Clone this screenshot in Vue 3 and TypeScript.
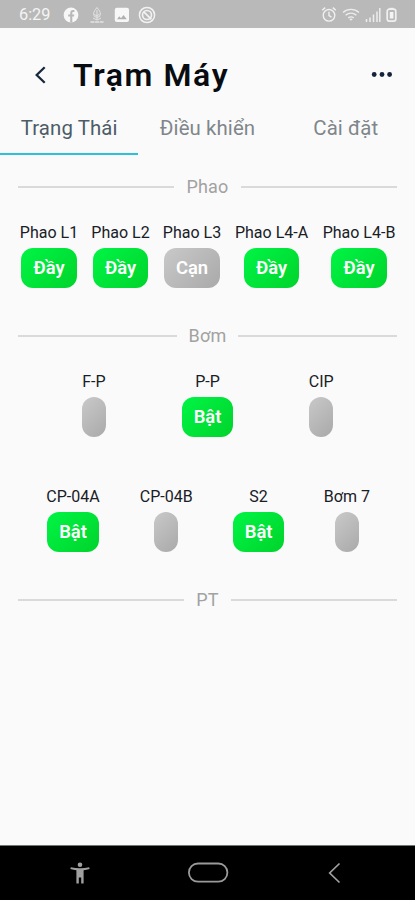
<script setup lang="ts">
interface Device {
  name: string
  state: string
  on: boolean
}

interface Group {
  title: string
  rows: { kind: string; devices: Device[] }[]
}

const tabs: string[] = ['Trạng Thái', 'Điều khiển', 'Cài đặt']

const groups: Group[] = [
  {
    title: 'Phao',
    rows: [
      {
        kind: 'floats',
        devices: [
          { name: 'Phao L1', state: 'Đầy', on: true },
          { name: 'Phao L2', state: 'Đầy', on: true },
          { name: 'Phao L3', state: 'Cạn', on: false },
          { name: 'Phao L4-A', state: 'Đầy', on: true },
          { name: 'Phao L4-B', state: 'Đầy', on: true },
        ],
      },
    ],
  },
  {
    title: 'Bơm',
    rows: [
      {
        kind: 'three',
        devices: [
          { name: 'F-P', state: '', on: false },
          { name: 'P-P', state: 'Bật', on: true },
          { name: 'CIP', state: '', on: false },
        ],
      },
      {
        kind: 'four',
        devices: [
          { name: 'CP-04A', state: 'Bật', on: true },
          { name: 'CP-04B', state: '', on: false },
          { name: 'S2', state: 'Bật', on: true },
          { name: 'Bơm 7', state: '', on: false },
        ],
      },
    ],
  },
  { title: 'PT', rows: [] },
]
</script>

<template>
  <div class="screen">
    <div class="status">
      <span class="clock">6:29</span>
      <svg class="ic-fb" width="16" height="16" viewBox="0 0 16 16">
        <circle cx="8" cy="8" r="7.4" fill="#f7f7f7" />
        <path d="M7.2 15.5V9.6H5.2V7.4h2V6c0-2.100 1.100-3.100 2.900-3.100h1.300v2h-1c-.8 0-1.100.4-1.100 1.100v1.400h2l-.3 2.200H9.300v5.900z" fill="#b9b9b9" />
      </svg>
      <svg class="ic-drop" width="16" height="18" viewBox="0 0 16 18" fill="none" stroke="#e4e4e4">
        <path d="M8 1.500C6 4 4.600 5.800 4.600 8a3.400 3.400 0 0 0 6.800 0C11.400 5.800 10 4 8 1.500zM8 4v10M5.500 8.500 8 10l2.500-2M4 12l4 2 4-2" stroke-width="1" />
        <path d="M1.500 16h13" stroke-width="1.700" stroke-dasharray="4 .6" />
      </svg>
      <svg class="ic-img" width="16" height="16" viewBox="0 0 16 16">
        <rect x=".8" y=".8" width="14.200" height="14.200" rx="2" fill="#f7f7f7" />
        <path d="M3 12.200 5.300 9.300 7 11.200l2.500-3.200 3.300 4.200z" fill="#b0b0b0" />
      </svg>
      <svg class="ic-ring" width="18" height="18" viewBox="0 0 18 18" fill="none" stroke="#f2f2f2">
        <circle cx="9" cy="9" r="7.600" stroke-width="1.500" />
        <circle cx="9" cy="9" r="4.500" stroke-width="1.700" />
        <path d="m5.800 5.800 7.600 7.600" stroke-width="1.700" />
      </svg>
      <span class="grow"></span>
      <svg width="16" height="17" viewBox="0 0 16 17" fill="none" stroke="#f0f0f0" stroke-width="1.400">
        <circle cx="8" cy="9.300" r="5.800" />
        <path d="M8 5.800v3.800l2.500 1.600M1.200 4.200l3-2.600M14.800 4.200l-3-2.600" />
      </svg>
      <svg class="ic-wifi" width="18" height="15" viewBox="0 0 18 15" fill="none" stroke="#ededed" stroke-width="1.400">
        <path d="M1 5.500c4.700-4.200 11.300-4.200 16 0M3.600 8.300c3.200-2.800 7.600-2.800 10.800 0M6.300 10.900c1.700-1.300 3.700-1.300 5.400 0" />
        <path d="m7.200 12.100 1.800 1.700 1.800-1.700a3 3 0 0 0-3.600 0z" fill="#ededed" stroke="none" />
      </svg>
      <svg class="ic-sig" width="16" height="16" viewBox="0 0 16 16" stroke="#ededed" stroke-width="1.500">
        <path d="M1.500 15v-3M5 15v-4.500M8.500 15V7.500M12 15V4.500M14.800 15V1" />
      </svg>
      <svg class="ic-bat" width="11" height="16" viewBox="0 0 11 16">
        <path d="M3.500 2V.8h4V2" fill="#f0f0f0" />
        <rect x="1.200" y="2.200" width="8.600" height="12" rx="2.200" fill="none" stroke="#f0f0f0" stroke-width="1.700" />
        <rect x="3.800" y="5" width="3.600" height="6.500" fill="#f4f4f4" />
      </svg>
    </div>

    <header class="header">
      <svg width="12" height="18" viewBox="0 0 12 18" fill="none" stroke="#18283c" stroke-width="2.300">
        <path d="M10.700 1.200 2.700 9l8 7.800" />
      </svg>
      <h1 class="title">Trạm Máy</h1>
      <svg width="22" height="6" viewBox="0 0 22 6" fill="#14233a">
        <circle cx="3.200" cy="2.500" r="2.400" />
        <circle cx="11" cy="2.500" r="2.400" />
        <circle cx="18.600" cy="2.500" r="2.400" />
      </svg>
    </header>

    <nav class="tabs">
      <span v-for="(tab, i) in tabs" :key="tab" class="tab" :class="{ active: i === 0 }">{{ tab }}</span>
    </nav>

    <main class="content">
      <section v-for="group in groups" :key="group.title" class="group">
        <div class="divider"><span class="caption">{{ group.title }}</span></div>
        <div v-for="row in group.rows" :key="row.kind" class="row" :class="row.kind">
          <div v-for="device in row.devices" :key="device.name" class="device">
            <span class="name">{{ device.name }}</span>
            <span class="badge" :class="{ on: device.on }">{{ device.state }}</span>
          </div>
        </div>
      </section>
    </main>

    <footer class="navbar">
      <svg width="20" height="22" viewBox="0 0 20 22" fill="#a0a0a0">
        <circle cx="10" cy="2.800" r="2.300" />
        <path d="M.8 5.300C6.500 6.600 13.500 6.600 19.200 5.300l.4 1.800c-2 .5-4 .9-6 1.100V21.500h-2.400V15.500H8.800v6H6.400V8.200c-2-.2-4-.6-6-1.100z" />
      </svg>
      <svg width="42" height="22" viewBox="0 0 42 22" fill="none" stroke="#9a9a9a" stroke-width="1.800">
        <rect x=".9" y="1.500" width="38.500" height="18.200" rx="9.100" />
      </svg>
      <svg width="14" height="22" viewBox="0 0 14 22" fill="none" stroke="#a0a0a0" stroke-width="1.700">
        <path d="M12.500 1.500 2.700 11l9.800 9.500" />
      </svg>
    </footer>
  </div>
</template>

<style>
body {
  background: #fafafa;
}
</style>

<style scoped>
.screen {
  width: 415px;
  height: 900px;
  display: flex;
  flex-direction: column;
  overflow: hidden;
  background: #fafafa;
  font-family: Roboto, "Noto Sans", sans-serif;
}
svg {
  display: block;
  flex: none;
}
.status {
  height: 28px;
  box-sizing: border-box;
  padding: 1px 18px 0 19px;
  display: flex;
  align-items: center;
  background: #b9b9b9;
  color: #f4f4f4;
}
.clock {
  width: 44px;
  font-size: 16.3px;
}
.ic-drop { margin-left: 10px; }
.ic-img { margin-left: 9px; }
.ic-ring { margin-left: 8px; }
.grow { flex: 1; }
.ic-wifi { margin-left: 5px; }
.ic-sig { margin-left: 5px; }
.ic-bat { margin-left: 5px; }
.header {
  height: 73px;
  box-sizing: border-box;
  padding: 20px 22px 0 34px;
  display: flex;
  align-items: center;
}
.title {
  flex: 1;
  margin: 0 0 0 27px;
  font-size: 32px;
  line-height: 40px;
  font-weight: 600;
  letter-spacing: 1.6px;
  color: #080c10;
}
.tabs {
  height: 54px;
  display: grid;
  grid-template-columns: repeat(3, 1fr);
}
.tab {
  box-sizing: border-box;
  padding-top: 14px;
  border-bottom: 2px solid transparent;
  text-align: center;
  font-size: 20.4px;
  line-height: 26px;
  letter-spacing: 0.1px;
  white-space: nowrap;
  color: #7f868b;
}
.tab.active {
  border-color: #2cc0dc;
  color: #4c5c68;
}
.content {
  flex: 1;
  padding-top: 19px;
}
.divider {
  height: 26px;
  margin: 0 18px;
  display: flex;
  align-items: center;
  gap: 12px;
  font-size: 18px;
  letter-spacing: 0.2px;
  color: #a2a2a2;
}
.caption {
  padding-bottom: 2px;
}
.divider::before,
.divider::after {
  content: "";
  flex: 1;
  height: 2px;
  background: #dadada;
}
.row {
  display: flex;
}
.floats {
  padding: 23px 0 35px 20.5px;
  gap: 14.5px;
}
.three {
  display: grid;
  grid-template-columns: repeat(3, 1fr);
  padding: 23px 37px 0;
}
.four {
  padding: 50px 0 35px 46px;
  gap: 39.3px;
}
.device {
  display: flex;
  flex-direction: column;
  align-items: center;
}
.floats .device {
  width: 57px;
}
.floats .device:nth-child(n + 4) {
  width: 73px;
}
.four .device {
  width: 54px;
}
.four .device:nth-child(3) {
  width: 52px;
}
.four .device:nth-child(4) {
  width: 46px;
}
.name {
  height: 25px;
  line-height: 20px;
  font-size: 16px;
  white-space: nowrap;
  color: #182026;
}
.badge {
  height: 40px;
  box-sizing: border-box;
  padding: 0 12px;
  border-radius: 12px;
  background: linear-gradient(135deg, #c9c9c9, #a9a9a9);
  color: #fff;
  font-size: 18.4px;
  line-height: 40px;
  font-weight: 600;
  white-space: nowrap;
}
.badge.on {
  background: linear-gradient(135deg, #00f545, #00d32c);
}
.navbar {
  height: 55px;
  box-sizing: border-box;
  border-top: 1px solid #6f7474;
  padding: 0 74px 0 70px;
  display: flex;
  align-items: center;
  justify-content: space-between;
  background: #000;
}
</style>
